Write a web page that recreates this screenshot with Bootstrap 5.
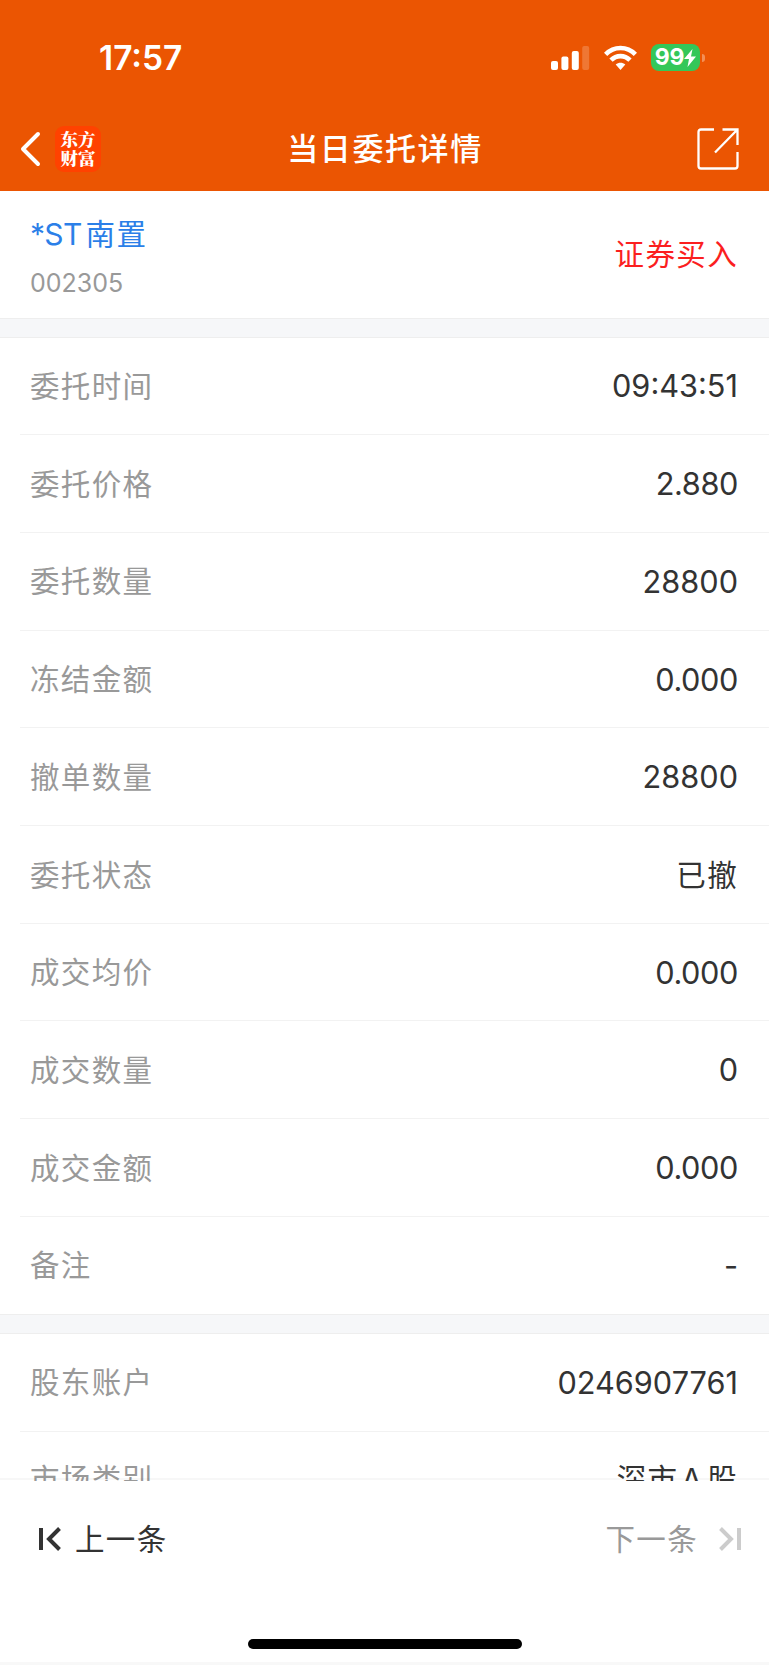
<!DOCTYPE html>
<html lang="zh-CN">
<head>
<meta charset="utf-8">
<meta name="viewport" content="width=device-width, initial-scale=1">
<title>当日委托详情</title>
<link href="https://cdn.jsdelivr.net/npm/bootstrap@5.3.0/dist/css/bootstrap.min.css" rel="stylesheet">
<style>
body{font-family:Inter,"Noto Sans CJK SC",sans-serif;color:#333;background:#fff;line-height:1}
svg{display:block;flex:none}
.screen{height:1665px}
.top-area{height:191px;background:#eb5502;color:#fff}
.status-bar{height:115px;padding:0 64px 0 99px}
.clock{font-size:33.5px;font-weight:600;letter-spacing:0;padding-top:2px}
.wifi{margin:0 14px}
.battery{width:49px;height:27px;border-radius:8px;background:#34c759;font-size:23px;font-weight:700;letter-spacing:-.3px}
.battery-tip{width:3px;height:8px;margin-left:2px;border-radius:0 4px 4px 0;background:#f38f57}
.title-bar{height:67px}
.title-side{width:280px;flex:none}
.title-left{padding-left:20px;gap:14px}
.title-right{padding-right:30px}
.app-logo{width:46px;height:46px;padding-top:3px;border-radius:9px;background:#ff4200;font:900 17.5px/19.5px "Noto Serif CJK SC","Noto Sans CJK SC",sans-serif}
.page-title{font-size:31px;font-weight:500;letter-spacing:1.6px;padding-left:1px;white-space:nowrap}
.summary{height:127px;padding:0 31px 0 30px}
.stock{padding-top:5px}
.zh{font-size:29.5px;letter-spacing:1.35px}
.zh-row{padding-top:2px}
.stock-name{color:#2b7fe8;font-size:30px;line-height:31px;letter-spacing:-.7px;margin-bottom:21px}
.stock-code{color:#999;font-size:25px;line-height:25px}
.side{color:#fb1f1f}
.section-gap{height:19.5px;background:#f6f7f9;border-top:1px solid #eee;border-bottom:1px solid #eee}
.detail{height:97.7px;margin-left:20px;padding:0 31px 0 10px;border-bottom:1px solid #f2f2f2}
.detail:last-child{border-bottom-color:transparent}
.key{color:#999}
.num{font-size:30.7px;padding-top:2px}
.decimal{letter-spacing:-.4px}
.latin{margin:0 4px 0 3px}
.bottom-bar{height:184px;position:relative}
.bottom-bar::before{content:"";position:absolute;left:0;right:0;top:-3px;height:2px;background:rgba(0,0,0,.03)}
.pager{height:116px;padding:0 27px 0 38px}
.pager-prev{margin-left:13px}
.pager-next{margin-left:20px}
.home-bar{width:274px;height:10px;margin:42px auto 13px;border-radius:5px;background:#000}
.edge{height:3px;background:#f8f8f8}
</style>
</head>
<body>
<div class="screen d-flex flex-column overflow-hidden">
<header class="top-area flex-shrink-0">
  <div class="status-bar d-flex align-items-center justify-content-between">
    <span class="clock">17:57</span>
    <div class="d-flex align-items-center">
      <svg width="39" height="26" viewBox="0 0 39 26" fill="#fff"><rect x="0" y="16" width="7" height="9" rx="2"/><rect x="10.400" y="11.500" width="7" height="13.500" rx="2"/><rect x="20.800" y="6" width="7" height="19" rx="2"/><rect x="31.200" y="1" width="7" height="24" rx="2" fill-opacity=".2"/></svg>
      <svg class="wifi" width="33" height="26" viewBox="0 0 33 26" fill="none" stroke="#fff" stroke-width="4.600"><path d="M1.600 9.400C9.900.9 23.100.9 31.400 9.400M7 15.200c5.400-5.500 13.600-5.500 19 0"/><path d="M11.700 19.600c2.900-2.600 6.700-2.600 9.600 0L16.500 25z" fill="#fff" stroke="none"/></svg>
      <div class="battery d-flex align-items-center justify-content-center"><span>99</span><svg width="12" height="18" viewBox="0 0 12 18" fill="#fff"><path d="M8.500 0 0 10h5L3.500 18 12 7.500H7z"/></svg></div>
      <span class="battery-tip"></span>
    </div>
  </div>
  <div class="title-bar d-flex align-items-center justify-content-between">
    <div class="title-side title-left d-flex align-items-center">
      <svg width="21" height="36" viewBox="0 0 21 36" fill="none" stroke="#fff" stroke-width="4" stroke-linecap="round" stroke-linejoin="round"><path d="M18 3 3 18l15 15"/></svg>
      <div class="app-logo text-center">东方<br>财富</div>
    </div>
    <h1 class="page-title mb-0">当日委托详情</h1>
    <div class="title-side title-right d-flex justify-content-end">
      <svg width="42" height="42" viewBox="0 0 42 42" fill="none" stroke="#fff" stroke-width="2.300"><path d="M17 1.500H4Q1.500 1.500 1.500 4v34Q1.500 40.500 4 40.500h34q2.500 0 2.500-2.500V24M25.500 1.500h15V17M40 2 18 24.500"/></svg>
    </div>
  </div>
</header>
<main class="flex-grow-1 overflow-hidden">
  <section class="summary d-flex align-items-center justify-content-between">
    <div class="stock"><div class="stock-name d-flex align-items-center"><span>*ST</span><span class="zh ms-1">南置</span></div><div class="stock-code">002305</div></div>
    <span class="zh side">证券买入</span>
  </section>
  <div class="section-gap"></div>
  <section>
    <div class="detail d-flex align-items-center justify-content-between"><span class="zh zh-row key">委托时间</span><span class="num">09:43:51</span></div>
    <div class="detail d-flex align-items-center justify-content-between"><span class="zh zh-row key">委托价格</span><span class="num decimal">2.880</span></div>
    <div class="detail d-flex align-items-center justify-content-between"><span class="zh zh-row key">委托数量</span><span class="num">28800</span></div>
    <div class="detail d-flex align-items-center justify-content-between"><span class="zh zh-row key">冻结金额</span><span class="num decimal">0.000</span></div>
    <div class="detail d-flex align-items-center justify-content-between"><span class="zh zh-row key">撤单数量</span><span class="num">28800</span></div>
    <div class="detail d-flex align-items-center justify-content-between"><span class="zh zh-row key">委托状态</span><span class="zh zh-row">已撤</span></div>
    <div class="detail d-flex align-items-center justify-content-between"><span class="zh zh-row key">成交均价</span><span class="num decimal">0.000</span></div>
    <div class="detail d-flex align-items-center justify-content-between"><span class="zh zh-row key">成交数量</span><span class="num">0</span></div>
    <div class="detail d-flex align-items-center justify-content-between"><span class="zh zh-row key">成交金额</span><span class="num decimal">0.000</span></div>
    <div class="detail d-flex align-items-center justify-content-between"><span class="zh zh-row key">备注</span><span class="num">-</span></div>
  </section>
  <div class="section-gap"></div>
  <section>
    <div class="detail d-flex align-items-center justify-content-between"><span class="zh zh-row key">股东账户</span><span class="num">0246907761</span></div>
    <div class="detail d-flex align-items-center justify-content-between"><span class="zh key">市场类别</span><span class="zh">深市<span class="latin">A</span>股</span></div>
  </section>
</main>
<footer class="bottom-bar flex-shrink-0">
  <div class="pager d-flex align-items-center justify-content-between">
    <div class="d-flex align-items-center"><svg width="24" height="24" viewBox="0 0 24 24" fill="none" stroke="#333" stroke-width="4"><path d="M3 1v22M21.500 1.500 11 12l10.500 10.500"/></svg><span class="zh zh-row pager-prev">上一条</span></div>
    <div class="d-flex align-items-center"><span class="zh zh-row key">下一条</span><svg class="pager-next" width="24" height="24" viewBox="0 0 24 24" fill="none" stroke="#ccc" stroke-width="4"><path d="M21 1v22M2.500 1.500 13 12 2.500 22.500"/></svg></div>
  </div>
  <div class="home-bar"></div>
  <div class="edge"></div>
</footer>
</div>
<script src="https://cdn.jsdelivr.net/npm/bootstrap@5.3.0/dist/js/bootstrap.bundle.min.js"></script>
</body>
</html>
